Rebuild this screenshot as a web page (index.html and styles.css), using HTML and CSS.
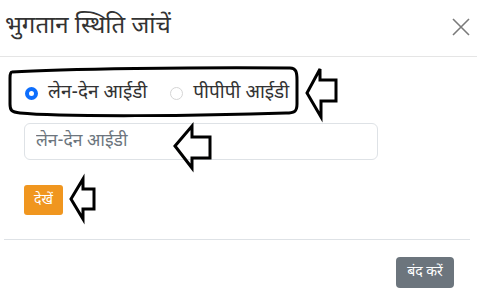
FILE: index.html
```html
<!DOCTYPE html>
<html lang="hi">
<head>
<meta charset="utf-8">
<link rel="stylesheet" href="styles.css">
</head>
<body>
<div class="modal">
  <div class="modal-header">
    <h4 class="title">भुगतान स्थिति जांचें</h4>
    <span class="close">
      <svg width="18" height="18" viewBox="0 0 18 18"><path d="M1 1 L17 17 M17 1 L1 17" stroke="#7a7a7a" stroke-width="1.6" fill="none"/></svg>
    </span>
  </div>
  <div class="modal-body">
    <div class="radios">
      <label class="opt"><input type="radio" name="t" checked><span>लेन-देन आईडी</span></label>
      <label class="opt"><input type="radio" name="t"><span>पीपीपी आईडी</span></label>
    </div>
    <input class="field" type="text" placeholder="लेन-देन आईडी">
    <button class="btn-view">देखें</button>
  </div>
  <div class="modal-footer">
    <button class="btn-close">बंद करें</button>
  </div>
  <svg class="marks" width="477" height="292" viewBox="0 0 477 292">
    <path d="M12 72 C60 69 200 67 290 68 C296 68 297 72 297 80 L297 104 C297 112 294 113 286 113 C200 116 60 117 20 113 C11 112 10 110 10 104 L10 78 C10 73 11 72 12 72 Z" fill="none" stroke="#000" stroke-width="3"/>
    <path d="M307 93 L320 69 L320 80 L336 80 L336 101 L321 101 L321 117 Z" fill="none" stroke="#000" stroke-width="3" stroke-linejoin="miter"/>
    <path d="M175 146 L192 126 L192 137 L210 137 L210 158 L192 158 L192 168 Z" fill="none" stroke="#000" stroke-width="3"/>
    <path d="M71 199 L83 179 L83 189 L94 189 L94 209 L83 209 L83 219 Z" fill="none" stroke="#000" stroke-width="3"/>
  </svg>
</div>
</body>
</html>
```

FILE: styles.css
```css
* { box-sizing: border-box; }
html, body { margin: 0; padding: 0; background: #fff; }
body {
  font-family: "Noto Sans Devanagari", "Noto Sans", "Lohit Devanagari", sans-serif;
  color: #333;
}
.modal {
  position: relative;
  width: 477px;
  height: 292px;
}
.modal-header {
  height: 57px;
  display: flex;
  align-items: center;
  justify-content: space-between;
  padding: 0 7px 2px 5px;
  border-bottom: 1px solid #e5e5e5;
}
.title {
  margin: 0;
  font-size: 24px;
  font-weight: 400;
  color: #333;
}
.close { display: flex; margin-right: 0; }
.modal-body {
  padding: 24px 24px 0 24px;
  display: flex;
  flex-direction: column;
  align-items: flex-start;
}
.radios {
  display: flex;
  align-items: center;
  height: 24px;
  margin-top: 0;
}
.opt {
  display: flex;
  align-items: center;
  font-size: 19px;
  color: #333;
  margin-right: 22px;
}
.opt input {
  appearance: none;
  -webkit-appearance: none;
  width: 13px;
  height: 13px;
  margin: 0 10px 0 1px;
  border-radius: 50%;
  border: 1px solid #d5d5d5;
  background: #fff;
}
.opt input:checked {
  border: 4px solid #0d6efd;
  background: #fff;
}
.field {
  margin-top: 18px;
  width: 354px;
  height: 37px;
  border: 1px solid #dee2e6;
  border-radius: 6px;
  padding: 0 11px;
  font-family: inherit;
  font-size: 17.5px;
  color: #333;
}
.field::placeholder { color: #6c757d; }
.btn-view {
  margin-top: 25px;
  width: 39px;
  height: 30px;
  border: none;
  border-radius: 3px;
  background: #f0961f;
  color: #fff;
  font-family: inherit;
  font-size: 14px;
  padding: 0;
}
.modal-footer {
  margin: 24px 7px 0 4px;
  border-top: 1px solid #dee2e6;
  display: flex;
  justify-content: flex-end;
  padding-top: 17px;
  padding-right: 16px;
}
.btn-close {
  width: 58px;
  height: 31px;
  border: none;
  border-radius: 4px;
  background: #6c757d;
  color: #fff;
  font-family: inherit;
  font-size: 14px;
  padding: 0;
}
.marks {
  position: absolute;
  top: 0;
  left: 0;
  pointer-events: none;
}
```
